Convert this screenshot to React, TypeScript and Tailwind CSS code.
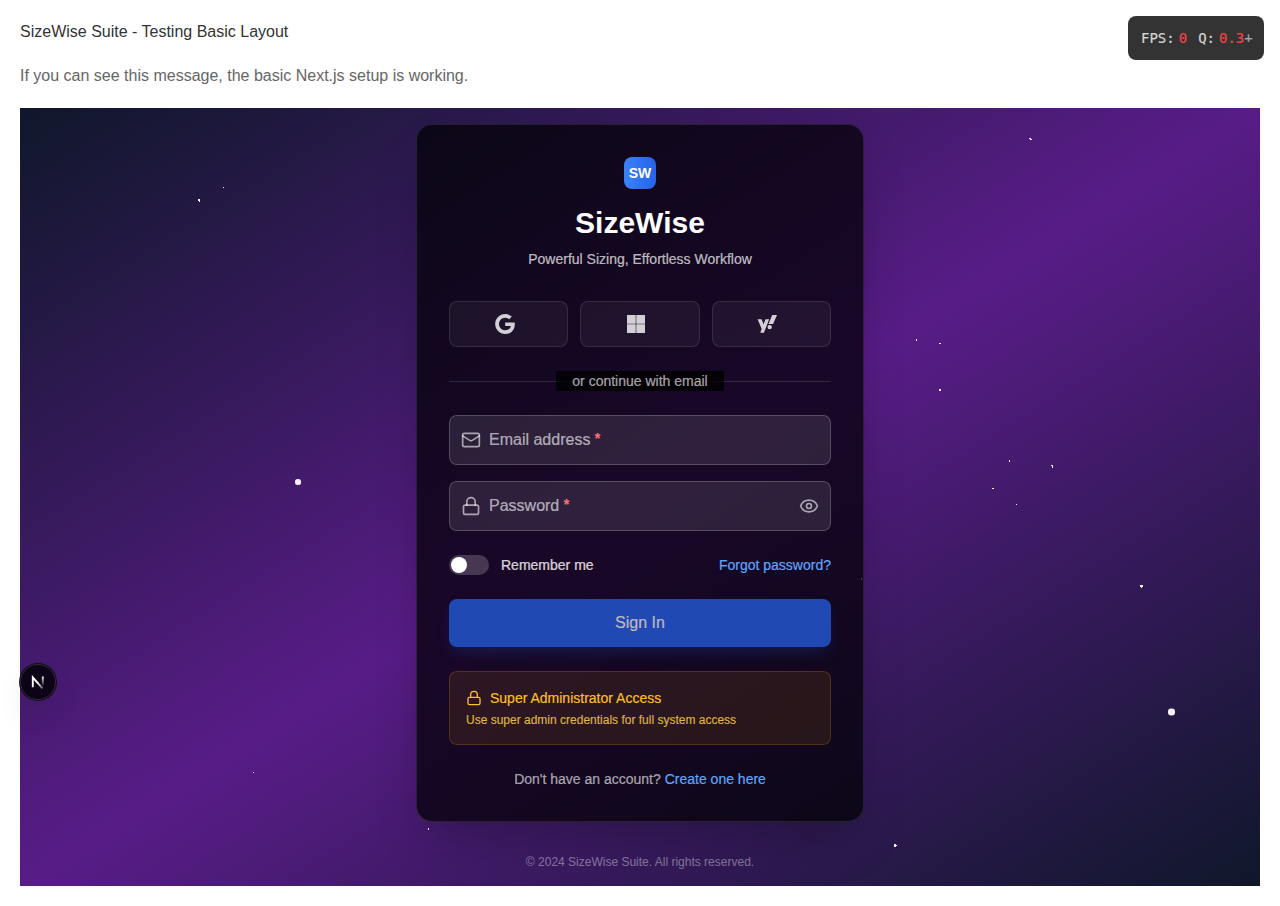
import React from "react";
import { Mail, Lock, Eye } from "lucide-react";

const stars = [
  [1029, 138, 2, 1], [1030, 139, 2, 1], [223, 187, 1, 1], [198, 199, 2, 2], [199, 201, 1, 1],
  [916, 339, 1, 2], [939, 343, 2, 1], [939, 389, 2, 2], [1009, 460, 1, 2], [1051, 465, 2, 1],
  [1052, 466, 1, 2], [992, 488, 2, 1], [1016, 504, 1, 1], [1140, 585, 3, 2], [1141, 587, 1, 1],
  [253, 772, 1, 1], [428, 828, 1, 2], [894, 844, 2, 3], [896, 845, 1, 1], [861, 578, 1, 2],
  [295, 479, 6, 6], [1168, 708.5, 7, 7],
];

const social =
  "flex h-[46px] items-center justify-center rounded-lg border border-white/10 bg-white/5 pr-2 text-white/80";

const field =
  "flex h-[50px] items-center rounded-lg border border-white/20 bg-white/10 px-[11px] text-white/60";

function Required() {
  return <span className="align-[2px] text-sm leading-none font-bold text-[#f87171]">*</span>;
}

export default function App() {
  return (
    <div className="relative h-[906px] overflow-hidden bg-white p-5 font-['Liberation_Sans',Arial,sans-serif] text-base">
      <h1 className="h-6 leading-6 text-[#333333]">SizeWise Suite - Testing Basic Layout</h1>
      <p className="mt-5 h-6 leading-6 text-[#666666]">If you can see this message, the basic Next.js setup is working.</p>
      <main className="relative mt-5 flex h-[778px] flex-col items-center overflow-hidden bg-[linear-gradient(to_bottom_right,#0f172a_0%,#581c87_50%,#0f172a_100%)] pt-4">
        <svg className="absolute inset-0 h-full w-full" viewBox="20 108 1240 778" fill="#f4f0f4">
          {stars.map(([x, y, w, h]) => (
            <rect key={`${x}-${y}`} x={x} y={y} width={w} height={h} rx={w > 4 ? w / 2 - 0.5 : 0} />
          ))}
        </svg>
        <section className="relative h-[698px] w-[448px] rounded-2xl border border-white/10 bg-[#020004]/72 p-8 shadow-[0_25px_50px_-12px_rgba(0,0,0,0.25)]">
          <div className="mx-auto flex size-8 items-center justify-center rounded-lg bg-[linear-gradient(to_right,#3b82f6,#2563eb)] text-sm font-bold text-white">
            SW
          </div>
          <h2 className="mt-4 text-center text-3xl leading-9 font-bold text-white">SizeWise</h2>
          <p className="mt-2 text-center text-sm text-white/70 [-webkit-text-stroke:0.2px]">Powerful Sizing, Effortless Workflow</p>
          <div className="mt-8 grid grid-cols-3 gap-3">
            <button className={social}>
              <svg className="size-5" viewBox="0 0 24 24" fill="currentColor">
                <path d="M12.24 10.285V14.4h6.806c-.275 1.765-2.056 5.174-6.806 5.174-4.095 0-7.439-3.389-7.439-7.574s3.345-7.574 7.439-7.574c2.33 0 3.891.989 4.785 1.849l3.254-3.138C18.189 1.186 15.479 0 12.24 0c-6.635 0-12 5.365-12 12s5.365 12 12 12c6.926 0 11.52-4.869 11.52-11.726 0-.788-.085-1.39-.189-1.989H12.24z" />
              </svg>
            </button>
            <button className={social}>
              <svg className="size-5" viewBox="0 0 20 20" fill="currentColor">
                <path d="M1 1h8.7v8.7H1zM10.3 1H19v8.7h-8.7zM1 10.3h8.7V19H1zM10.3 10.3H19V19h-8.7z" />
              </svg>
            </button>
            <button className={social}>
              <svg className="size-5" viewBox="0 0 20 20" fill="currentColor">
                <path d="M.6 5.2h4l2 5.1L8.5 5.2h3.7L6.9 18.8H3.2l1.5-3.7zM15.2 1h4.8l-3.9 9h-4.6zM12.7 10.9a2.2 2.2 0 1 1 0 4.4a2.2 2.2 0 0 1 0-4.4z" />
              </svg>
            </button>
          </div>
          <div className="relative mt-6 flex h-5 items-center justify-center">
            <div className="absolute inset-x-0 top-[10px] h-px bg-white/12" />
            <span className="relative bg-black/80 px-4 text-sm text-white/60 [-webkit-text-stroke:0.2px]">or continue with email</span>
          </div>
          <div className={`mt-6 ${field}`}>
            <Mail className="size-5" />
            <span className="ml-2 [-webkit-text-stroke:0.2px]">Email address <Required /></span>
          </div>
          <div className={`mt-4 ${field}`}>
            <Lock className="size-5" />
            <span className="ml-2 [-webkit-text-stroke:0.2px]">Password <Required /></span>
            <Eye className="ml-auto size-5" />
          </div>
          <div className="mt-6 flex h-5 items-center text-sm [-webkit-text-stroke:0.2px]">
            <div className="flex h-5 w-10 items-center rounded-full bg-white/20 pl-0.5">
              <div className="size-4 rounded-full bg-white" />
            </div>
            <span className="ml-3 text-white/80">Remember me</span>
            <a className="ml-auto text-[#60a5fa]">Forgot password?</a>
          </div>
          <button className="mt-6 flex h-12 w-full items-center justify-center rounded-lg bg-[#2149b3] text-[#bdb8bf] shadow-[0_8px_15px_-3px_rgba(37,99,235,0.2)] [-webkit-text-stroke:0.2px]">
            Sign In
          </button>
          <div className="mt-6 h-[74px] rounded-lg border border-[#f59e0b]/20 bg-[#f59e0b]/10 p-4 [-webkit-text-stroke:0.2px]">
            <div className="flex h-5 items-center gap-2 text-sm text-[#fbbf24]">
              <Lock className="size-4" />
              Super Administrator Access
            </div>
            <p className="mt-1 text-xs text-[#fcd34d]/80">Use super admin credentials for full system access</p>
          </div>
          <p className="mt-6 text-center text-sm text-white/60 [-webkit-text-stroke:0.2px]">
            Don't have an account? <a className="text-[#60a5fa]">Create one here</a>
          </p>
        </section>
        <p className="relative mt-8 text-xs text-white/40">© 2024 SizeWise Suite. All rights reserved.</p>
      </main>
      <div className="absolute top-4 right-4 flex h-11 w-[136px] items-center rounded-lg bg-[#333333] pl-[13px] font-['DejaVu_Sans_Mono',monospace] text-sm text-[#d1d5db] [-webkit-text-stroke:0.2px]">
        <span>FPS:</span>
        <span className="ml-1 text-[#ef4444]">0</span>
        <span className="ml-[11px]">Q:</span>
        <span className="ml-1 text-[#ef4444]">0.3</span>
        <span className="text-[#9ca3af]">+</span>
      </div>
      <div className="absolute top-[664px] left-5 flex size-9 items-center justify-center rounded-full border border-[#302a36] bg-[#0d0316] shadow-[0_0_0_1px_#150d1e,0_16px_32px_-8px_rgba(0,0,0,0.24)]">
        <svg width="14" height="14" viewBox="0 0 14 14" fill="none" strokeWidth="1.9">
          <defs>
            <linearGradient id="stem" x1="0" y1="1" x2="0" y2="12" gradientUnits="userSpaceOnUse">
              <stop stopColor="white" />
              <stop offset="0.95" stopColor="white" stopOpacity="0" />
            </linearGradient>
            <linearGradient id="slash" x1="7" y1="7" x2="12" y2="13.5" gradientUnits="userSpaceOnUse">
              <stop stopColor="white" />
              <stop offset="1" stopColor="white" stopOpacity="0.3" />
            </linearGradient>
          </defs>
          <path d="M1.8 12.3V2.4l9.7 11.1" stroke="url(#slash)" />
          <path d="M11.8 1.5v10" stroke="url(#stem)" />
        </svg>
      </div>
    </div>
  );
}
